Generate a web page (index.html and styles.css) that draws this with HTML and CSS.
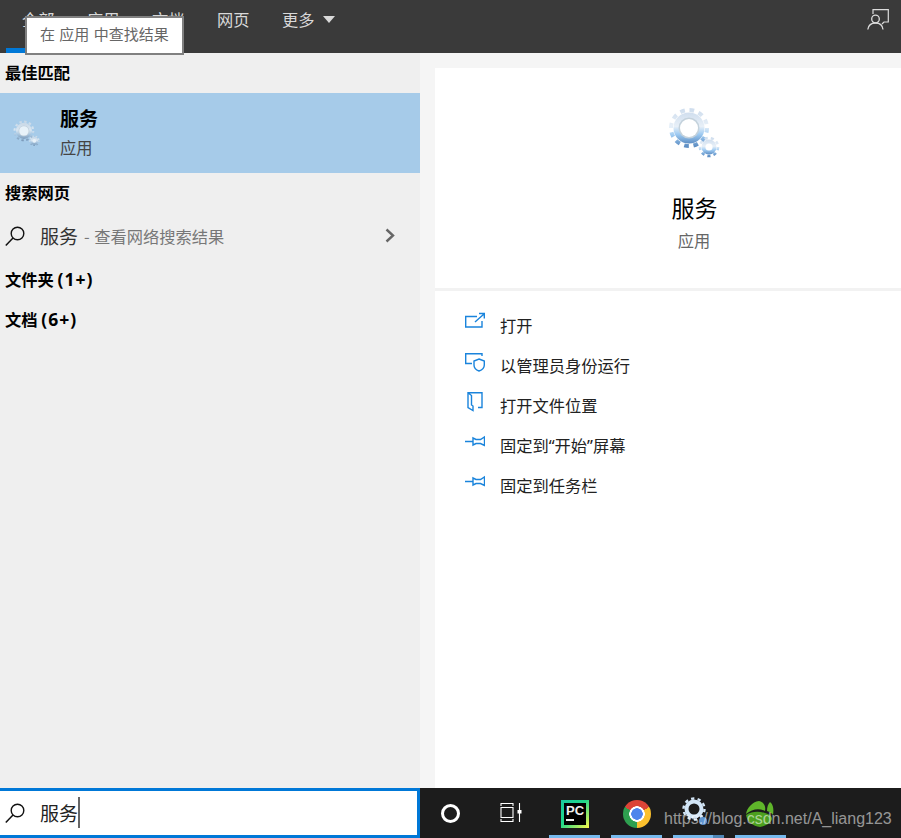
FILE: index.html
```html
<!DOCTYPE html>
<html lang="zh-CN">

<head>
  <meta charset="UTF-8">
  <title>服务</title>
  <link rel="stylesheet" href="styles.css">
</head>

<body>
  <svg class="defs" width="0" height="0">
    <defs>
      <linearGradient id="gearFill" x1="0" y1="0" x2="0" y2="1">
        <stop offset="0" stop-color="#d0deee" />
        <stop offset="0.45" stop-color="#e8f0f8" />
        <stop offset="0.7" stop-color="#9fcbf2" />
        <stop offset="1" stop-color="#5f8fc4" />
      </linearGradient>
      <symbol id="gears" viewBox="0 0 52 52">
        <circle cx="21" cy="21" r="15.5" fill="url(#gearFill)" />
        <circle cx="21" cy="21" r="18" fill="none" stroke="url(#gearFill)" stroke-width="4" stroke-dasharray="4.71 4.71" />
        <circle cx="21" cy="21" r="10.5" fill="#c4d2dc" />
        <circle cx="21" cy="21" r="9" fill="#fff" />
        <circle cx="41" cy="40" r="7.5" fill="url(#gearFill)" />
        <circle cx="41" cy="40" r="9" fill="none" stroke="url(#gearFill)" stroke-width="2.6" stroke-dasharray="3.14 3.14" />
        <circle cx="41" cy="40" r="3.6" fill="#fff" />
      </symbol>
      <symbol id="search" viewBox="0 0 20 20">
        <circle cx="12.5" cy="7.5" r="6.3" fill="none" stroke="currentColor" stroke-width="1.4" />
        <path d="M8 12 L0.8 19.4" fill="none" stroke="currentColor" stroke-width="1.5" />
      </symbol>
      <symbol id="pin" viewBox="0 0 20 20">
        <path d="M0 9.5H8M8 6V13L11 11.5H15.5L19.5 13.5V5L15.5 7.5H11Z" fill="none" stroke="currentColor" stroke-width="1.4" />
      </symbol>
    </defs>
  </svg>

  <div class="page">
    <header class="topbar">
      <nav class="tabs">
        <a class="tab active">全部</a>
        <a class="tab">应用</a>
        <a class="tab">文档</a>
        <a class="tab">网页</a>
        <a class="tab">更多<span class="caret"></span></a>
      </nav>
      <svg class="feedback" viewBox="0 0 22 21">
        <path d="M6 5V0.7H21.3V13H17L15 15" fill="none" stroke="currentColor" stroke-width="1.2" />
        <circle cx="8.5" cy="10" r="3.8" fill="none" stroke="currentColor" stroke-width="1.3" />
        <path d="M0.8 20.5C1.5 16 4.5 14 8.5 14S15.500 16 16 20.500" fill="none" stroke="currentColor" stroke-width="1.3" />
      </svg>
    </header>

    <div class="tooltip">在 应用 中查找结果</div>

    <main class="main">
      <section class="results">
        <h2 class="group">最佳匹配</h2>
        <div class="best">
          <svg class="best-icon"><use href="#gears" /></svg>
          <div>
            <div class="best-title">服务</div>
            <div class="best-sub">应用</div>
          </div>
        </div>
        <h2 class="group">搜索网页</h2>
        <div class="web-row">
          <svg class="search-icon"><use href="#search" /></svg>
          <span class="web-name">服务</span>
          <span class="web-hint">- 查看网络搜索结果</span>
          <svg class="chevron" viewBox="0 0 10 15">
            <path d="M1.500 1.500L8 7.500L1.500 13.500" fill="none" stroke="currentColor" stroke-width="2.400" />
          </svg>
        </div>
        <h2 class="group">文件夹 <span class="count">(1+)</span></h2>
        <h2 class="group">文档 <span class="count">(6+)</span></h2>
      </section>

      <section class="preview">
        <div class="hero">
          <svg class="hero-icon"><use href="#gears" /></svg>
          <div class="hero-title">服务</div>
          <div class="hero-sub">应用</div>
        </div>
        <ul class="actions">
          <li>
            <svg class="action-icon" viewBox="0 0 20 20">
              <path d="M12 4.500H0.700V15H17V9M10 10L19 2M14 1.500H19.300V6.500" fill="none" stroke="currentColor" stroke-width="1.400" />
            </svg>
            打开
          </li>
          <li>
            <svg class="action-icon" viewBox="0 0 20 20">
              <path d="M17 4V1.700H0.700V11.500H7" fill="none" stroke="currentColor" stroke-width="1.400" />
              <path d="M14 7L19.300 9V13C19.300 16 17 18 14 19C11 18 9 16 9 13V9Z" fill="none" stroke="currentColor" stroke-width="1.400" />
            </svg>
            以管理员身份运行
          </li>
          <li>
            <svg class="action-icon" viewBox="0 0 20 20">
              <path d="M3 0.700H17V15.500H13M3 0.700L6.500 3.500V13L8 14V18.500L3 15.500Z" fill="none" stroke="currentColor" stroke-width="1.400" />
            </svg>
            打开文件位置
          </li>
          <li>
            <svg class="action-icon"><use href="#pin" /></svg>
            固定到“开始”屏幕
          </li>
          <li>
            <svg class="action-icon"><use href="#pin" /></svg>
            固定到任务栏
          </li>
        </ul>
      </section>
    </main>

    <footer class="bottom">
      <div class="searchbox">
        <svg class="search-icon"><use href="#search" /></svg>
        <span class="query">服务</span>
      </div>
      <div class="taskbar">
        <div class="sys-btn"><span class="cortana"></span></div>
        <div class="sys-btn">
          <svg class="taskview" viewBox="0 0 22 19">
            <path d="M1 0.500H13M1 18.500H13M1 4.500H13V14.500H1ZM1 0V3M13 0V3M1 16V19M13 16V19M19.500 0V19" fill="none" stroke="currentColor" stroke-width="1.100" />
            <rect x="17.500" y="7" width="4" height="3.500" fill="currentColor" />
          </svg>
        </div>
        <div class="app">
          <div class="pc-icon">
            <div class="pc-inner">
              <span class="pc-text">PC</span>
              <span class="pc-line"></span>
            </div>
          </div>
        </div>
        <div class="app"><span class="chrome"></span></div>
        <div class="app app-multi">
          <svg class="tb-gear" viewBox="0 0 26 30">
            <circle cx="12" cy="12" r="7.500" fill="none" stroke="#d3e6f7" stroke-width="4" />
            <circle cx="12" cy="12" r="10.500" fill="none" stroke="#d3e6f7" stroke-width="2.400" stroke-dasharray="3.300 3.300" />
            <circle cx="21" cy="24" r="4" fill="#5f94cf" />
          </svg>
        </div>
        <div class="app">
          <svg class="leaf" viewBox="0 0 30 30">
            <path d="M1 15C2 9 7 3 14 2C19 3 21 7 20 12C14 9 7 10 1 15Z" fill="#5fb52a" />
            <path d="M22 12C22 8 23 5 25 3C28 5 29 10 28 16C27 14 25 13 22 12Z" fill="#5fb52a" />
            <path d="M1 16C7 12 14 12 20 14C24 15 27 17 27 20C26 24 21 27 15 28C8 27 2 23 1 16Z" fill="#4ca01f" />
          </svg>
        </div>
      </div>
    </footer>

    <div class="watermark">https://blog.csdn.net/A_liang123</div>
  </div>
</body>

</html>
```

FILE: styles.css
```css
* {
  margin: 0;
  padding: 0;
  list-style: none;
  box-sizing: border-box;
}

html,
body {
  height: 100%;
}

body {
  font-family: "Noto Sans CJK SC", "Noto Sans", sans-serif;
  font-size: 16.25px;
  color: #000;
  background: #f5f5f5;
  overflow: hidden;
}

.defs {
  display: block;
}

.page {
  position: relative;
  width: 901px;
  height: 838px;
  display: flex;
  flex-direction: column;
}

/* top bar */
.topbar {
  height: 53px;
  flex: none;
  background: #3a3a3a;
  display: flex;
  justify-content: space-between;
  padding-left: 6px;
}

.tabs {
  display: flex;
  gap: 0.5px;
}

.tab {
  height: 53px;
  padding: 0 16px;
  line-height: 38px;
  color: #d9d9d9;
  display: flex;
  align-items: flex-start;
}

.tab.active {
  border-bottom: 5px solid #0078d7;
}

.caret {
  width: 0;
  height: 0;
  margin: 16px 0 0 8px;
  border-left: 6.5px solid transparent;
  border-right: 6.5px solid transparent;
  border-top: 7px solid #d9d9d9;
}

.feedback {
  width: 22px;
  height: 21px;
  margin: 9px 12px 0 0;
  color: #dcdcdc;
}

.tooltip {
  position: absolute;
  left: 25px;
  top: 16px;
  width: 159px;
  height: 39px;
  border: 2px solid #808080;
  background: #fff;
  color: #666;
  font-size: 15px;
  word-spacing: 1px;
  line-height: 32px;
  padding-left: 13px;
  white-space: pre;
}

/* main area */
.main {
  flex: 1;
  display: flex;
  min-height: 0;
}

.results {
  width: 420px;
  flex: none;
  background: #efefef;
}

.group {
  height: 40px;
  line-height: 38px;
  padding-left: 5px;
  font-size: 16.25px;
  font-weight: 700;
}

.count {
  font-family: "Noto Sans", sans-serif;
  font-size: 17.5px;
  letter-spacing: 1px;
}

.best {
  height: 80px;
  background: #a6cbe9;
  display: flex;
  align-items: center;
}

.best-icon {
  width: 27px;
  height: 27px;
  margin: 0 20px 0 13px;
  opacity: 0.75;
  filter: saturate(0.6) blur(0.4px);
}

.best-title {
  font-size: 19px;
  font-weight: 700;
  line-height: 28px;
}

.best-sub {
  color: #444;
  line-height: 30px;
}

.web-row {
  height: 47px;
  display: flex;
  align-items: center;
  padding: 0 0 2px 5px;
}

.search-icon {
  width: 20px;
  height: 20px;
  color: #111;
  flex: none;
}

.web-name {
  font-size: 19px;
  color: #333;
  margin-left: 15px;
}

.web-hint {
  color: #777;
  margin-left: 6px;
  word-spacing: 1px;
}

.chevron {
  width: 10px;
  height: 15px;
  color: #666;
  margin-left: auto;
  margin-right: 25px;
}

.preview {
  flex: 1;
  margin: 15px 0 0 15px;
  background: #fff;
}

.hero {
  height: 223px;
  border-bottom: 3px solid #f2f2f2;
  display: flex;
  flex-direction: column;
  align-items: center;
  padding: 39px 0 0 52px;
}

.hero-icon {
  width: 52px;
  height: 52px;
}

.hero-title {
  font-size: 23px;
  line-height: 34px;
  margin: 31px 0 0 1px;
}

.hero-sub {
  color: #666;
  line-height: 24px;
  margin-top: 4px;
}

.actions {
  padding-top: 14px;
  font-family: "Noto Sans", "Noto Sans CJK SC", sans-serif;
}

.actions li {
  height: 40px;
  display: flex;
  align-items: center;
  gap: 15px;
  padding-left: 30px;
  color: #222;
}

.action-icon {
  width: 20px;
  height: 20px;
  flex: none;
  color: #1a84dc;
  margin-top: -6px;
}

/* bottom row */
.bottom {
  height: 50px;
  flex: none;
  display: flex;
}

.searchbox {
  width: 420px;
  flex: none;
  background: #fff;
  border: 3px solid #0078d7;
  border-left-width: 0;
  display: flex;
  align-items: center;
  padding-left: 5px;
}

.query {
  font-size: 19px;
  color: #222;
  margin: -1px 0 0 15px;
  border-right: 2px solid #666;
  line-height: 31px;
}

.taskbar {
  flex: 1;
  background: #1c1c1c;
  display: flex;
}

.sys-btn {
  width: 60px;
  display: flex;
  align-items: center;
  justify-content: center;
  color: #fff;
}

.sys-btn:nth-child(2) {
  width: 64px;
}

.cortana {
  width: 19px;
  height: 19px;
  border: 3px solid #fff;
  border-radius: 50%;
  margin-top: 1px;
}

.taskview {
  width: 22px;
  height: 19px;
  margin: -2px 0 0 -2px;
}

.app {
  width: 62px;
  position: relative;
  display: flex;
  align-items: center;
  justify-content: center;
}

.app::after {
  content: "";
  position: absolute;
  left: 5px;
  right: 6px;
  bottom: 0;
  height: 3px;
  background: #76b9ed;
}

.app-multi::before {
  content: "";
  position: absolute;
  right: 6px;
  bottom: 0;
  width: 11px;
  height: 3px;
  background: #4f86b5;
  z-index: 1;
}

.pc-icon {
  width: 28px;
  height: 28px;
  padding: 3px;
  background: linear-gradient(135deg, #18c9a0 0%, #21d789 45%, #fcf84a 100%);
  margin-top: 1px;
}

.pc-inner {
  width: 22px;
  height: 22px;
  background: #000;
  padding: 2px 0 0 2px;
  position: relative;
}

.pc-text {
  display: block;
  font-family: "Liberation Sans", sans-serif;
  font-size: 13px;
  font-weight: 700;
  line-height: 12px;
  color: #f0f0f0;
}

.pc-line {
  display: block;
  width: 8px;
  height: 2px;
  background: #f0f0f0;
  margin-top: 2px;
}

.chrome {
  width: 28px;
  height: 28px;
  border-radius: 50%;
  margin: 1px 1px 0 0;
  background:
    radial-gradient(circle, #4f86ec 0 5.5px, #fff 6px 7.5px, transparent 8px),
    conic-gradient(from -60deg, #dc4437 0 120deg, #fbc02d 120deg 240deg, #2e9f4f 240deg 360deg);
}

.tb-gear {
  width: 26px;
  height: 30px;
  margin: -3px 8px 0 0;
}

.leaf {
  width: 30px;
  height: 30px;
  margin: 2px 3px 0 0;
}

.watermark {
  position: absolute;
  left: 664px;
  top: 808px;
  font-family: "Liberation Sans", sans-serif;
  font-size: 16px;
  line-height: 22px;
  color: rgba(255, 255, 255, 0.55);
  white-space: nowrap;
}
```
